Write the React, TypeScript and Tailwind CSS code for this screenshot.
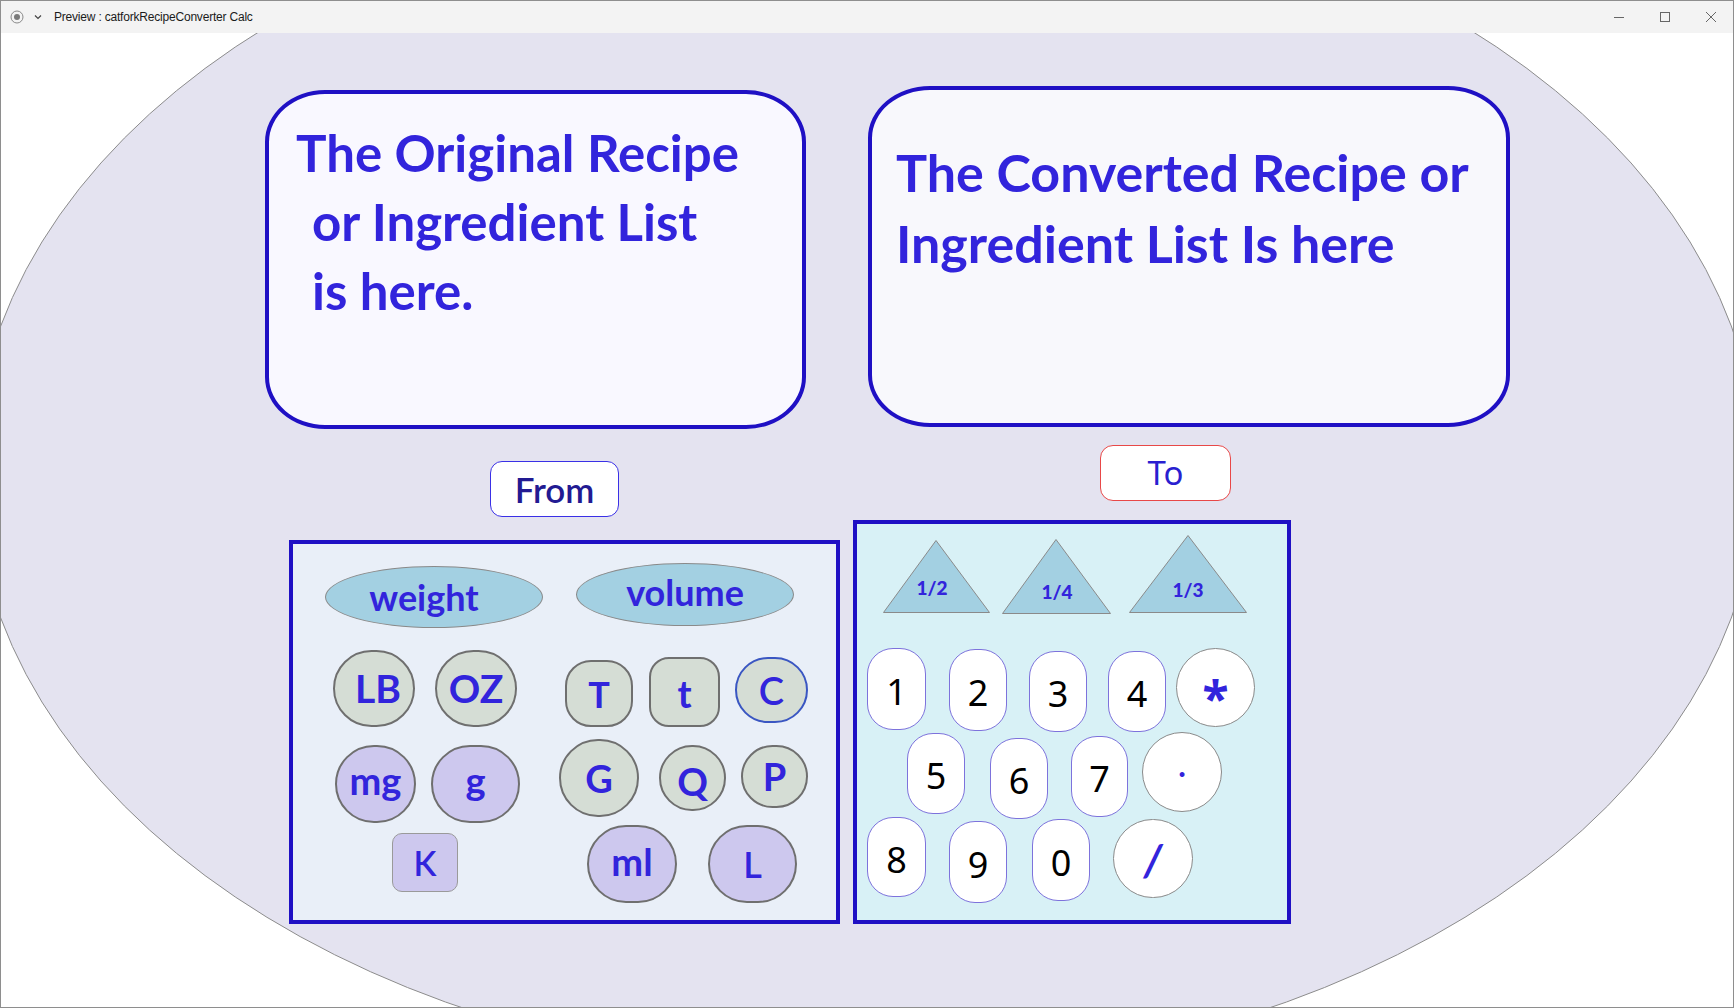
import React from "react";

const unitText = "flex items-center justify-center font-bold text-[#3224dc]";
const sage = "bg-[#d5ddd5] border-[2.5px] border-[#6f6f6f]";
const lilac = "bg-[#cdc8ee] border-[2.5px] border-[#6f6f6f]";
const numKey =
  "flex items-center justify-center pt-[5px] bg-white border-[1.5px] border-[#7d72dc] rounded-[26px] text-[36px] text-black font-['Noto_Sans',sans-serif]";
const opKey =
  "flex items-center justify-center bg-white border border-[#8a8a8a] rounded-full font-bold text-[#3224dc]";

function TitleBar() {
  return (
    <div className="h-[32px] shrink-0 bg-[#f3f3f3] flex items-center font-['Liberation_Sans',sans-serif] text-[12px] text-[#1b1b1b]">
      <svg width="14" height="14" viewBox="0 0 14 14" className="ml-[9px]">
        <circle cx="7" cy="7" r="6" fill="none" stroke="#8a8a8a" strokeWidth="1" />
        <circle cx="7" cy="7" r="3" fill="#7a7a7a" />
      </svg>
      <svg width="10" height="10" viewBox="0 0 10 10" className="ml-[9px]">
        <path d="M2 3.5 L5 6.5 L8 3.5" fill="none" stroke="#444" strokeWidth="1.2" />
      </svg>
      <span className="ml-[11px] tracking-[-0.2px]">Preview : catforkRecipeConverter Calc</span>
      <div className="ml-auto flex items-center">
        <svg width="12" height="12" viewBox="0 0 12 12">
          <path d="M1 6.5 H11" stroke="#666" strokeWidth="1" />
        </svg>
        <svg width="12" height="12" viewBox="0 0 12 12" className="ml-[34px]">
          <rect x="1.5" y="1.5" width="9" height="9" fill="none" stroke="#666" strokeWidth="1" />
        </svg>
        <svg width="12" height="12" viewBox="0 0 12 12" className="ml-[34px] mr-[16px]">
          <path d="M1 1 L11 11 M11 1 L1 11" stroke="#666" strokeWidth="1" />
        </svg>
      </div>
    </div>
  );
}

function Triangle({ w, h, apex, tx, ty, label }: { w: number; h: number; apex: number; tx: number; ty: number; label: string }) {
  return (
    <svg width={w} height={h} viewBox={`0 0 ${w} ${h}`}>
      <polygon points={`${apex},0.5 ${w - 0.5},${h - 0.5} 0.5,${h - 0.5}`} fill="#a3d0e2" stroke="#8a8a8a" strokeWidth="1" />
      <text x={tx} y={ty} textAnchor="middle" dominantBaseline="middle" fontFamily="Lato, sans-serif" fontWeight="900" fontSize="19" fill="#3224dc">
        {label}
      </text>
    </svg>
  );
}

function FromPanel() {
  return (
    <div className="w-[551px] h-[384px] mt-[23px] border-4 border-[#1f10c4] bg-[#e9eff8] flex items-start">
      {/* weight side */}
      <div className="w-[260px] flex flex-col items-start">
        <div className={`${unitText} text-[36px] ml-[32px] mt-[22px] w-[218px] h-[62px] rounded-[50%] bg-[#a3d0e2] border border-[#8a8a8a] pr-[20px]`}>weight</div>
        <div className="flex mt-[22px]">
          <div className={`${unitText} ${sage} text-[39px] ml-[40px] w-[82px] h-[77px] rounded-full pl-[8px]`}>LB</div>
          <div className={`${unitText} ${sage} text-[39px] ml-[20px] w-[82px] h-[77px] rounded-full`}>OZ</div>
        </div>
        <div className="flex mt-[18px]">
          <div className={`${unitText} ${lilac} text-[38px] ml-[42px] w-[81px] h-[78px] rounded-full pb-[8px]`}>mg</div>
          <div className={`${unitText} ${lilac} text-[38px] ml-[15px] w-[89px] h-[78px] rounded-full pb-[8px]`}>g</div>
        </div>
        <div className={`${unitText} text-[34px] ml-[99px] mt-[10px] w-[66px] h-[59px] rounded-[10px] bg-[#cdc8ee] border border-[#9a9a9a] font-semibold`}>K</div>
      </div>
      {/* volume side */}
      <div className="flex flex-col items-start">
        <div className={`${unitText} text-[36px] ml-[23px] mt-[19px] w-[218px] h-[63px] rounded-[50%] bg-[#a3d0e2] border border-[#8a8a8a] pb-[6px]`}>volume</div>
        <div className="flex items-start mt-[31px]">
          <div className={`${unitText} ${sage} text-[36px] ml-[12px] mt-[3px] w-[68px] h-[67px] rounded-[26px]`}>T</div>
          <div className={`${unitText} ${sage} text-[38px] ml-[16px] w-[71px] h-[70px] rounded-[20px] pt-[3px]`}>t</div>
          <div className={`${unitText} text-[38px] ml-[15px] w-[73px] h-[66px] rounded-full bg-[#d5ddd5] border-2 border-[#3a56c2] font-semibold`}>C</div>
        </div>
        <div className="flex items-start mt-[12px]">
          <div className={`${unitText} ${sage} text-[38px] ml-[6px] w-[80px] h-[78px] rounded-full`}>G</div>
          <div className={`${unitText} ${sage} text-[38px] ml-[20px] mt-[6px] w-[67px] h-[66px] rounded-full pt-[6px]`}>Q</div>
          <div className={`${unitText} ${sage} text-[38px] ml-[15px] mt-[6px] w-[67px] h-[63px] rounded-full`}>P</div>
        </div>
        <div className="flex items-start mt-[8px]">
          <div className={`${unitText} ${lilac} text-[38px] ml-[34px] w-[90px] h-[78px] rounded-full pb-[5px]`}>ml</div>
          <div className={`${unitText} ${lilac} text-[36px] ml-[31px] w-[89px] h-[78px] rounded-full font-semibold`}>L</div>
        </div>
      </div>
    </div>
  );
}

function Keypad() {
  return (
    <div className="w-[438px] h-[404px] mt-[19px] border-4 border-[#1f10c4] bg-[#d8f1f6] flex flex-col items-start">
      <div className="flex items-start">
        <div className="ml-[26px] mt-[16px]">
          <Triangle w={107} h={73} apex={53} tx={49} ty={50} label="1/2" />
        </div>
        <div className="ml-[12px] mt-[15px]">
          <Triangle w={109} h={75} apex={54} tx={55} ty={55} label="1/4" />
        </div>
        <div className="ml-[18px] mt-[11px]">
          <Triangle w={118} h={78} apex={59} tx={59} ty={57} label="1/3" />
        </div>
      </div>
      <div className="flex items-start mt-[34px]">
        <div className={`${numKey} ml-[10px] w-[59px] h-[82px]`}>1</div>
        <div className={`${numKey} ml-[23px] mt-[1px] w-[58px] h-[82px]`}>2</div>
        <div className={`${numKey} ml-[22px] mt-[3px] w-[58px] h-[81px]`}>3</div>
        <div className={`${numKey} ml-[21px] mt-[3px] w-[58px] h-[81px]`}>4</div>
        <div className={`${opKey} ml-[10px] w-[79px] h-[79px] text-[48px] font-['Noto_Sans',sans-serif] pt-[20px]`}>*</div>
      </div>
      <div className="flex items-start">
        <div className={`${numKey} ml-[50px] mt-[1px] w-[58px] h-[81px]`}>5</div>
        <div className={`${numKey} ml-[25px] mt-[6px] w-[58px] h-[81px]`}>6</div>
        <div className={`${numKey} ml-[23px] mt-[4px] w-[57px] h-[81px]`}>7</div>
        <div className={`${opKey} ml-[14px] w-[80px] h-[80px] text-[32px] font-black pb-[14px]`}>.</div>
      </div>
      <div className="flex items-start mt-[-2px]">
        <div className={`${numKey} ml-[10px] w-[59px] h-[80px]`}>8</div>
        <div className={`${numKey} ml-[23px] mt-[4px] w-[58px] h-[82px]`}>9</div>
        <div className={`${numKey} ml-[25px] mt-[2px] w-[58px] h-[82px]`}>0</div>
        <div className={`${opKey} ml-[23px] mt-[2px] w-[80px] h-[79px] text-[44px] font-black italic`}>/</div>
      </div>
    </div>
  );
}

export default function App() {
  return (
    <div className="w-[1734px] h-[1008px] flex flex-col bg-white border border-[#8e8e8e] overflow-hidden font-['Lato',sans-serif]">
      <TitleBar />
      <div className="relative flex-1 overflow-hidden">
        <svg className="absolute inset-0" width="1732" height="974">
          <ellipse cx="865" cy="439" rx="892" ry="601" fill="#e4e3f0" stroke="#8c8c8c" strokeWidth="1" />
        </svg>
        <div className="relative flex flex-col items-start pl-[264px] pt-[53px]">
          {/* recipe boxes */}
          <div className="flex items-start">
            <div className="w-[541px] h-[339px] mt-[4px] border-4 border-[#1f10c4] rounded-[60px_/_52px] bg-[#f9f8ff] pt-[24px] pl-[27px] text-[51px] leading-[69px] font-bold text-[#3224dc]">
              <div>The Original Recipe</div>
              <div className="pl-[16px]">or Ingredient List</div>
              <div className="pl-[16px]">is here.</div>
            </div>
            <div className="w-[642px] h-[341px] ml-[62px] border-4 border-[#1f10c4] rounded-[62px_/_52px] bg-[#f8f8fc] pt-[47px] pl-[24px] text-[52px] leading-[71px] font-bold text-[#3224dc]">
              <div>The Converted Recipe or</div>
              <div>Ingredient List Is here</div>
            </div>
          </div>
          {/* converter */}
          <div className="flex items-start ml-[24px] mt-[16px]">
            <div className="flex flex-col items-start mt-[16px]">
              <div className="ml-[201px] w-[129px] h-[56px] rounded-[12px] border-[1.5px] border-[#3a30e6] bg-white flex items-center justify-center text-[35px] font-semibold text-[#221a92]">
                From
              </div>
              <FromPanel />
            </div>
            <div className="flex flex-col items-start ml-[13px]">
              <div className="ml-[247px] w-[131px] h-[56px] rounded-[13px] border-[1.5px] border-[#e84848] bg-white flex items-center justify-center text-[33px] text-[#2a1fd0] font-['Noto_Sans',sans-serif]">
                To
              </div>
              <Keypad />
            </div>
          </div>
        </div>
      </div>
    </div>
  );
}
